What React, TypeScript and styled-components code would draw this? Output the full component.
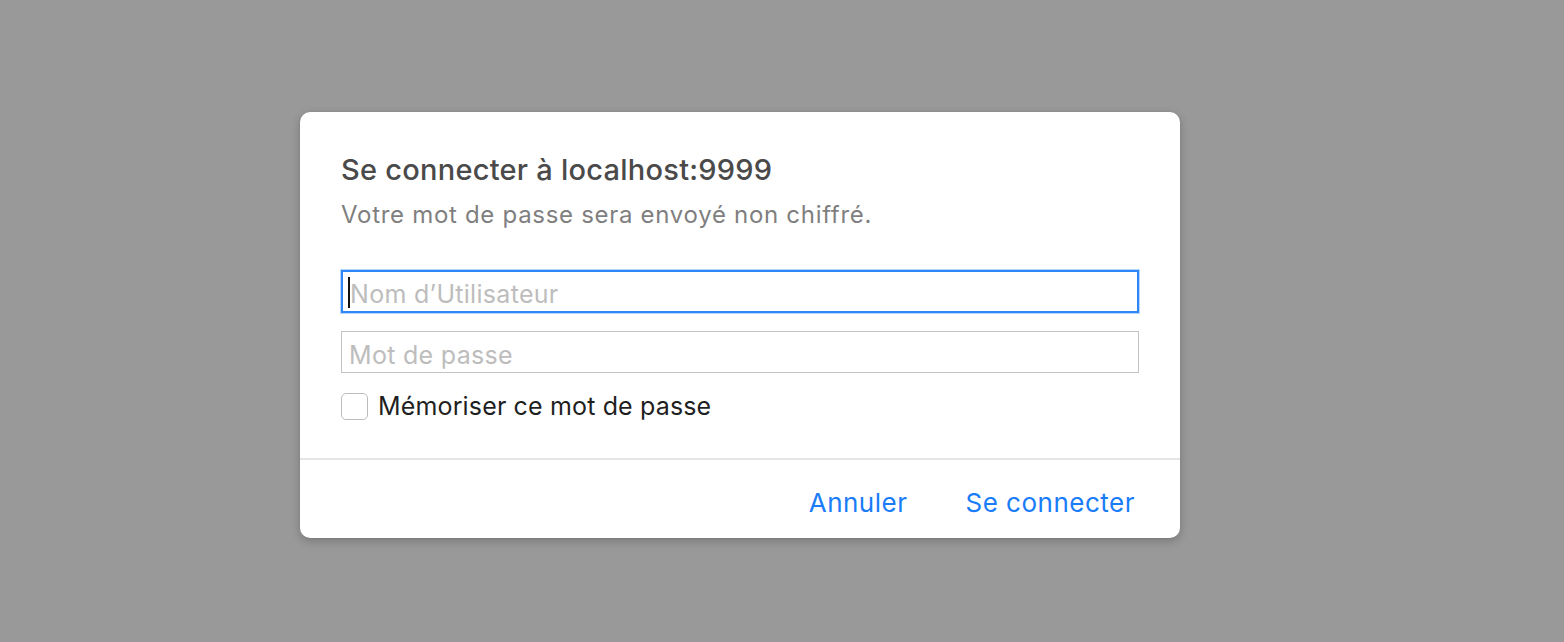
import React from "react";
import styled, { createGlobalStyle } from "styled-components";

const Global = createGlobalStyle`
  html, body { margin: 0; padding: 0; background: #999999; }
  body { font-family: Inter, "Liberation Sans", Arial, sans-serif; }
  * { box-sizing: border-box; }
`;

const Page = styled.div`
  width: 1564px;
  height: 642px;
  padding: 112px 0 0 300px;
  background: #999999;
`;

const Dialog = styled.div`
  width: 880px;
  height: 426px;
  background: #ffffff;
  border-radius: 10px;
  box-shadow: 0 3px 10px rgba(0, 0, 0, 0.22), 0 0 1px rgba(0, 0, 0, 0.2);
  display: flex;
  flex-direction: column;
  overflow: hidden;
`;

const Body = styled.div`
  padding: 40px 41px 0 41px;
  display: flex;
  flex-direction: column;
  height: 348px;
  flex: none;
  border-bottom: 2px solid #e6e6e6;
`;

const Title = styled.h1`
  margin: 0;
  font-size: 29px;
  line-height: 36px;
  font-weight: 500;
  color: #4a4a4a;
  letter-spacing: 0.25px;
`;

const Subtitle = styled.p`
  margin: 12px 0 0 0;
  font-size: 24px;
  line-height: 30px;
  font-weight: 400;
  color: #7f7f7f;
  letter-spacing: 0.7px;
`;

const FieldWrap = styled.div<{ $top: number }>`
  position: relative;
  margin-top: ${(p) => p.$top}px;
`;

const Field = styled.input<{ $focused?: boolean }>`
  display: block;
  width: 798px;
  height: ${(p) => (p.$focused ? 43 : 42)}px;
  margin: 0;
  padding: 5px 7px 0 7px;
  font-family: Inter, "Liberation Sans", Arial, sans-serif;
  font-size: 25px;
  letter-spacing: 0.3px;
  color: #222;
  background: #fff;
  border-radius: 0;
  outline: none;
  caret-color: transparent;
  border: ${(p) => (p.$focused ? "2px solid #2d87f9" : "1px solid #c4c4c4")};
  box-shadow: ${(p) => (p.$focused ? "0 0 0 1px rgba(45,135,249,0.35)" : "none")};
  &::placeholder {
    color: #bdbdbd;
  }
`;

const Caret = styled.span`
  position: absolute;
  left: 7px;
  top: 7px;
  width: 2px;
  height: 31px;
  background: #111;
`;

const CheckRow = styled.label`
  display: flex;
  align-items: center;
  gap: 10px;
  margin-top: 18px;
  cursor: default;
`;

const Box = styled.span`
  width: 27px;
  height: 27px;
  border: 1px solid #bcbcbc;
  border-radius: 5px;
  background: #fff;
  flex: none;
`;

const CheckLabel = styled.span`
  font-size: 25px;
  line-height: 30px;
  color: #1f1f1f;
  letter-spacing: 0.15px;
`;

const Footer = styled.div`
  flex: 1;
  display: flex;
  justify-content: flex-end;
  align-items: center;
  gap: 58px;
  padding: 7px 45px 0 0;
`;

const ActionButton = styled.button`
  border: none;
  background: none;
  padding: 0;
  margin: 0;
  font-family: Inter, "Liberation Sans", Arial, sans-serif;
  font-size: 26px;
  line-height: 30px;
  color: #1a7cf8;
  cursor: pointer;
  letter-spacing: 0.5px;
`;

export default function App() {
  return (
    <>
      <Global />
      <Page>
        <Dialog>
          <Body>
            <Title>Se connecter à localhost:9999</Title>
            <Subtitle>Votre mot de passe sera envoyé non chiffré.</Subtitle>
            <FieldWrap $top={40}>
              <Field $focused placeholder="Nom d’Utilisateur" />
              <Caret />
            </FieldWrap>
            <FieldWrap $top={18}>
              <Field type="password" placeholder="Mot de passe" />
            </FieldWrap>
            <CheckRow>
              <Box />
              <CheckLabel>Mémoriser ce mot de passe</CheckLabel>
            </CheckRow>
          </Body>
          <Footer>
            <ActionButton>Annuler</ActionButton>
            <ActionButton>Se connecter</ActionButton>
          </Footer>
        </Dialog>
      </Page>
    </>
  );
}
